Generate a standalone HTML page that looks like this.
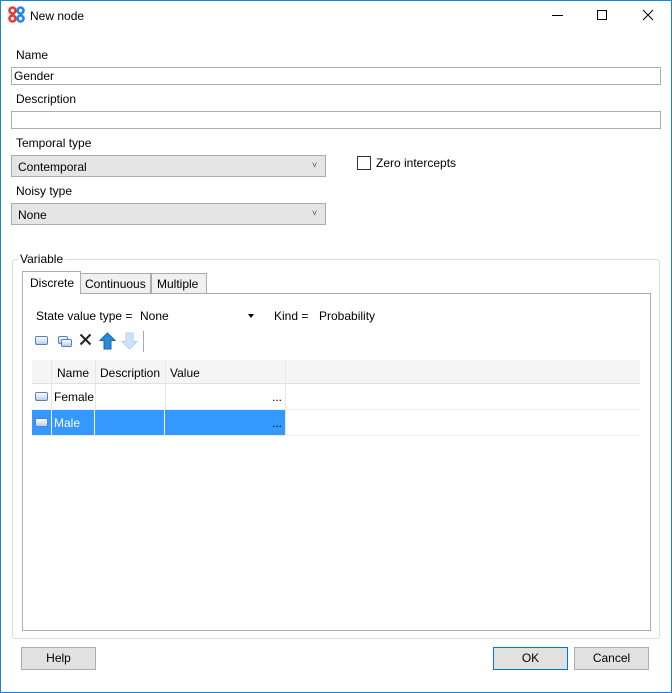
<!DOCTYPE html>
<html><head><style>
*{margin:0;padding:0;box-sizing:border-box}
body{width:672px;height:693px;background:#fff;font-family:"Liberation Sans",sans-serif;font-size:12px;color:#000;position:relative;overflow:hidden}
.a{position:absolute}
.win{left:0;top:0;width:672px;height:693px;border:1px solid #1883d7}
.t{position:absolute;white-space:nowrap;line-height:14px}
.inp{position:absolute;border:1px solid #abadb3;background:#fff}
.cmb{position:absolute;border:1px solid #acacac;background:#e5e5e5}
.btn{position:absolute;border:1px solid #adadad;background:#e1e1e1;text-align:center;line-height:20px}
.ico{position:absolute;width:13px;height:9px;border:1px solid #5a7fc0;border-radius:2px;background:linear-gradient(#fff,#b9cdf0)}
</style></head><body>
<div class="a win"></div>
<svg class="a" style="left:8px;top:6px" width="17" height="17" viewBox="0 0 17 17">
<circle cx="4.5" cy="4.5" r="3" fill="none" stroke="#e53935" stroke-width="2.6"/>
<circle cx="12.5" cy="4.5" r="3" fill="none" stroke="#1e88e5" stroke-width="2.6"/>
<circle cx="4.5" cy="12.5" r="3" fill="none" stroke="#e53935" stroke-width="2.6"/>
<circle cx="12.5" cy="12.5" r="3" fill="none" stroke="#1e88e5" stroke-width="2.6"/></svg>
<div class="t" style="left:30px;top:9px">New node</div>
<div class="a" style="left:552px;top:15px;width:11px;height:1px;background:#000"></div>
<div class="a" style="left:597px;top:10px;width:10px;height:10px;border:1px solid #000"></div>
<svg class="a" style="left:642px;top:9px" width="12" height="12"><path d="M1 1L11 11M11 1L1 11" stroke="#000" stroke-width="1"/></svg>

<div class="t" style="left:16px;top:48px">Name</div>
<div class="inp" style="left:11px;top:67px;width:650px;height:18px"><div class="t" style="left:2px;top:1px">Gender</div></div>
<div class="t" style="left:16px;top:92px">Description</div>
<div class="inp" style="left:11px;top:111px;width:650px;height:18px"></div>
<div class="t" style="left:16px;top:136px">Temporal type</div>
<div class="cmb" style="left:11px;top:155px;width:315px;height:22px"><div class="t" style="left:6px;top:4px">Contemporal</div><div class="t" style="left:300px;top:2px;font-size:9px;color:#555">˅</div></div>
<div class="t" style="left:16px;top:184px">Noisy type</div>
<div class="cmb" style="left:11px;top:203px;width:315px;height:22px"><div class="t" style="left:6px;top:4px">None</div><div class="t" style="left:300px;top:2px;font-size:9px;color:#555">˅</div></div>
<div class="a" style="left:357px;top:156px;width:14px;height:14px;border:1px solid #333;background:#fff"></div>
<div class="t" style="left:376px;top:156px">Zero intercepts</div>

<div class="a" style="left:12px;top:259px;width:648px;height:380px;border:1px solid #dcdcdc;border-radius:3px"></div>
<div class="t" style="left:18px;top:252px;background:#fff;padding:0 2px">Variable</div>

<div class="a" style="left:22px;top:293px;width:629px;height:338px;border:1px solid #acacac"></div>
<div class="a" style="left:80px;top:273px;width:71px;height:21px;border:1px solid #acacac;background:#f0f0f0"></div>
<div class="t" style="left:85px;top:277px">Continuous</div>
<div class="a" style="left:151px;top:273px;width:56px;height:21px;border:1px solid #acacac;background:#f0f0f0"></div>
<div class="t" style="left:157px;top:277px">Multiple</div>
<div class="a" style="left:22px;top:271px;width:59px;height:23px;border:1px solid #acacac;border-bottom:none;background:#fff"></div>
<div class="t" style="left:30px;top:276px">Discrete</div>

<div class="t" style="left:36px;top:309px">State value type =</div>
<div class="t" style="left:140px;top:309px">None</div>
<div class="a" style="left:248px;top:314px;border:3px solid transparent;border-top:4px solid #000"></div>
<div class="t" style="left:274px;top:309px">Kind =</div>
<div class="t" style="left:319px;top:309px">Probability</div>

<div class="ico" style="left:35px;top:336px"></div>
<div class="ico" style="left:58px;top:336px;width:10px;height:8px"></div>
<div class="ico" style="left:61px;top:339px;width:11px;height:8px"></div>
<svg class="a" style="left:79px;top:333px" width="13" height="13"><path d="M1.5 1.5L11.5 11.5M11.5 1.5L1.5 11.5" stroke="#222" stroke-width="2"/></svg>
<svg class="a" style="left:99px;top:332px" width="17" height="18"><path d="M8.5 1L16 8.5H12V17H5V8.5H1Z" fill="#2a8ad8" stroke="#1565b0"/></svg>
<svg class="a" style="left:121px;top:332px" width="17" height="18"><path d="M8.5 17L16 9.5H12V1H5V9.5H1Z" fill="#cfe4f8" stroke="#b3d2f0"/></svg>
<div class="a" style="left:143px;top:331px;width:1px;height:21px;background:#aaa"></div>

<div class="a" style="left:32px;top:360px;width:608px;height:24px;background:#f5f5f5;border-bottom:1px solid #e0e0e0"></div>
<div class="a" style="left:51px;top:360px;width:1px;height:76px;background:#e6e6e6"></div>
<div class="a" style="left:95px;top:360px;width:1px;height:76px;background:#e6e6e6"></div>
<div class="a" style="left:165px;top:360px;width:1px;height:76px;background:#e6e6e6"></div>
<div class="a" style="left:285px;top:360px;width:1px;height:76px;background:#e6e6e6"></div>
<div class="t" style="left:57px;top:366px">Name</div>
<div class="t" style="left:100px;top:366px">Description</div>
<div class="t" style="left:170px;top:366px">Value</div>
<div class="a" style="left:32px;top:409px;width:608px;height:1px;background:#eee"></div>
<div class="a" style="left:32px;top:435px;width:608px;height:1px;background:#eee"></div>
<div class="ico" style="left:35px;top:392px"></div>
<div class="t" style="left:54px;top:390px">Female</div>
<div class="t" style="left:272px;top:390px">...</div>
<div class="a" style="left:32px;top:410px;width:253px;height:25px;background:#3399ff"></div>
<div class="a" style="left:51px;top:410px;width:1px;height:25px;background:#fff"></div>
<div class="a" style="left:94px;top:410px;width:1px;height:25px;background:#fff"></div>
<div class="a" style="left:164px;top:410px;width:1px;height:25px;background:#fff"></div>
<div class="ico" style="left:35px;top:418px"></div>
<div class="t" style="left:54px;top:416px;color:#fff">Male</div>
<div class="t" style="left:272px;top:416px">...</div>

<div class="btn" style="left:21px;top:647px;width:75px;height:23px">Help</div>
<div class="btn" style="left:493px;top:647px;width:75px;height:23px;border-color:#0078d7">OK</div>
<div class="btn" style="left:574px;top:647px;width:75px;height:23px">Cancel</div>
</body></html>
